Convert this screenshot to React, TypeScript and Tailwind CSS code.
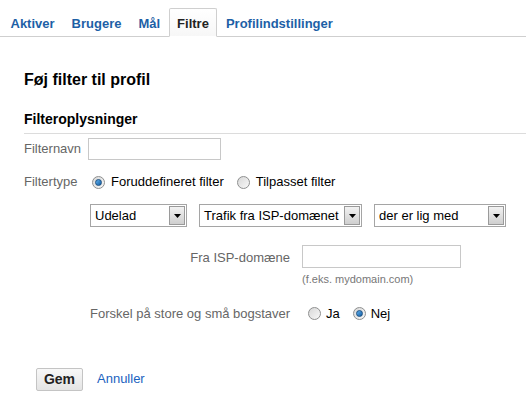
import { ReactNode } from 'react'

const TABS = ['Aktiver', 'Brugere', 'Mål', 'Filtre', 'Profilindstillinger']

function Radio({ checked }: { checked?: boolean }) {
  return (
    <span className="inline-flex h-[13px] w-[13px] shrink-0 items-center justify-center rounded-full border border-[#8e8f8f] bg-gradient-to-br from-[#d8d8d8] to-[#f8f8f8]">
      {checked && (
        <span className="h-[7px] w-[7px] rounded-full border border-[#1b4f80] bg-gradient-to-br from-[#5fb1f0] to-[#0f5ea3]" />
      )}
    </span>
  )
}

function Select({ value, width }: { value: string; width: string }) {
  return (
    <div className={`flex h-[23px] items-center border border-[#a5a5a5] bg-white ${width}`}>
      <span className="flex-1 truncate pl-[4px] text-[13px] text-black">{value}</span>
      <span className="mr-[1px] flex h-[19px] w-[16px] items-center justify-center border border-[#9a9a9a] bg-gradient-to-b from-[#f2f2f2] to-[#cfcfcf]">
        <svg width="7" height="4" viewBox="0 0 7 4">
          <path d="M0 0h7L3.5 4z" fill="#000" />
        </svg>
      </span>
    </div>
  )
}

function Row({ label, children, className }: { label: string; children: ReactNode; className?: string }) {
  return (
    <div className={`flex items-center ${className ?? ''}`}>
      <span className="w-[64px] text-[13px] text-[#666]">{label}</span>
      {children}
    </div>
  )
}

export default function App() {
  return (
    <div className="h-[405px] w-[526px] bg-white font-['Liberation_Sans',Arial,sans-serif]">
      {/* Tabs */}
      <div className="flex h-[37px] items-end border-b border-[#cfcfcf] pl-[2px]">
        {TABS.map((tab) =>
          tab === 'Filtre' ? (
            <div
              key={tab}
              className="-mb-px flex h-[29px] items-center rounded-t-[2px] border border-b-white border-[#cfcfcf] bg-gradient-to-b from-white to-[#f7f7f7] px-[7.5px] pt-[3px] text-[13px] font-bold text-[#222]"
            >
              {tab}
            </div>
          ) : (
            <div key={tab} className="flex h-[28px] items-center px-[8.5px] pt-[3px] text-[13px] font-bold text-[#1d5fa6]">
              {tab}
            </div>
          )
        )}
      </div>

      <div className="pl-[24px]">
        <h1 className="mt-[33px] text-[16px] font-bold leading-[20px] text-black">Føj filter til profil</h1>
        <h2 className="mt-[20px] border-b border-[#dcdcdc] pb-[5px] text-[14px] font-bold leading-[18px] text-black">
          Filteroplysninger
        </h2>

        <Row label="Filternavn" className="mt-[4px]">
          <div className="h-[22px] w-[133px] border border-[#c8c8c8] bg-white" />
        </Row>

        <Row label="Filtertype" className="mt-[12px] h-[20px]">
          <div className="ml-[4px] flex items-center gap-[5px] text-[13px] text-black">
            <Radio checked />
            <span className="pl-[1px]">Foruddefineret filter</span>
            <span className="ml-[3px]" />
            <Radio />
            <span className="pl-[1px]">Tilpasset filter</span>
          </div>
        </Row>

        <div className="mt-[12px] flex gap-[12px] pl-[66px]">
          <Select value="Udelad" width="w-[97px]" />
          <Select value="Trafik fra ISP-domænet" width="w-[163px]" />
          <Select value="der er lig med" width="w-[132px]" />
        </div>

        <div className="mt-[18px] flex pl-[66px]">
          <span className="w-[200px] pt-[3px] text-right text-[13px] text-[#666]">Fra ISP-domæne</span>
          <div className="ml-[12px] flex flex-col">
            <div className="h-[23px] w-[159px] border border-[#c8c8c8] bg-white" />
            <span className="mt-[3px] text-[11px] text-[#777]">(f.eks. mydomain.com)</span>
          </div>
        </div>

        <div className="mt-[17px] flex h-[18px] items-center pl-[66px]">
          <span className="w-[200px] whitespace-nowrap text-right text-[13px] text-[#666]">
            Forskel på store og små bogstaver
          </span>
          <div className="ml-[18px] flex items-center gap-[5px] text-[13px] text-black">
            <Radio />
            <span>Ja</span>
            <span className="ml-[3px]" />
            <Radio checked />
            <span>Nej</span>
          </div>
        </div>

        <div className="mt-[45px] flex items-center pl-[12px]">
          <button className="h-[23px] w-[47px] rounded-[2px] border border-[#c4c4c4] bg-gradient-to-b from-[#f8f8f8] to-[#e4e4e4] text-[14px] font-bold text-[#222]">
            Gem
          </button>
          <a className="ml-[14px] text-[13px] text-[#1a62c0]">Annuller</a>
        </div>
      </div>
    </div>
  )
}
